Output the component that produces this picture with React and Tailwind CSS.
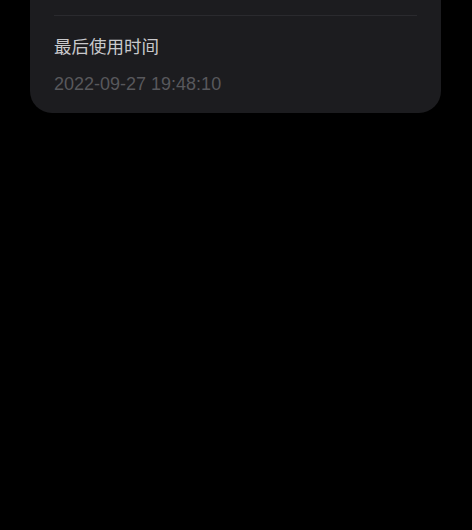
export default function App() {
  return (
    <div className="w-[472px] h-[530px] bg-black overflow-hidden" style={{ fontFamily: '"Liberation Sans", "Noto Sans CJK SC", sans-serif' }}>
      <div className="ml-[30px] w-[411px] h-[113px] bg-[#1c1c1f] rounded-b-[22px] pt-[15px] px-[24px]">
        <div className="h-px bg-[#2a2a2e]" />
        <div className="mt-[19px] text-[17.5px] leading-[24px] text-[#c9c9cc]">最后使用时间</div>
        <div className="mt-[13px] text-[18px] leading-[24px] text-[#58585c]">2022-09-27 19:48:10</div>
      </div>
    </div>
  );
}
